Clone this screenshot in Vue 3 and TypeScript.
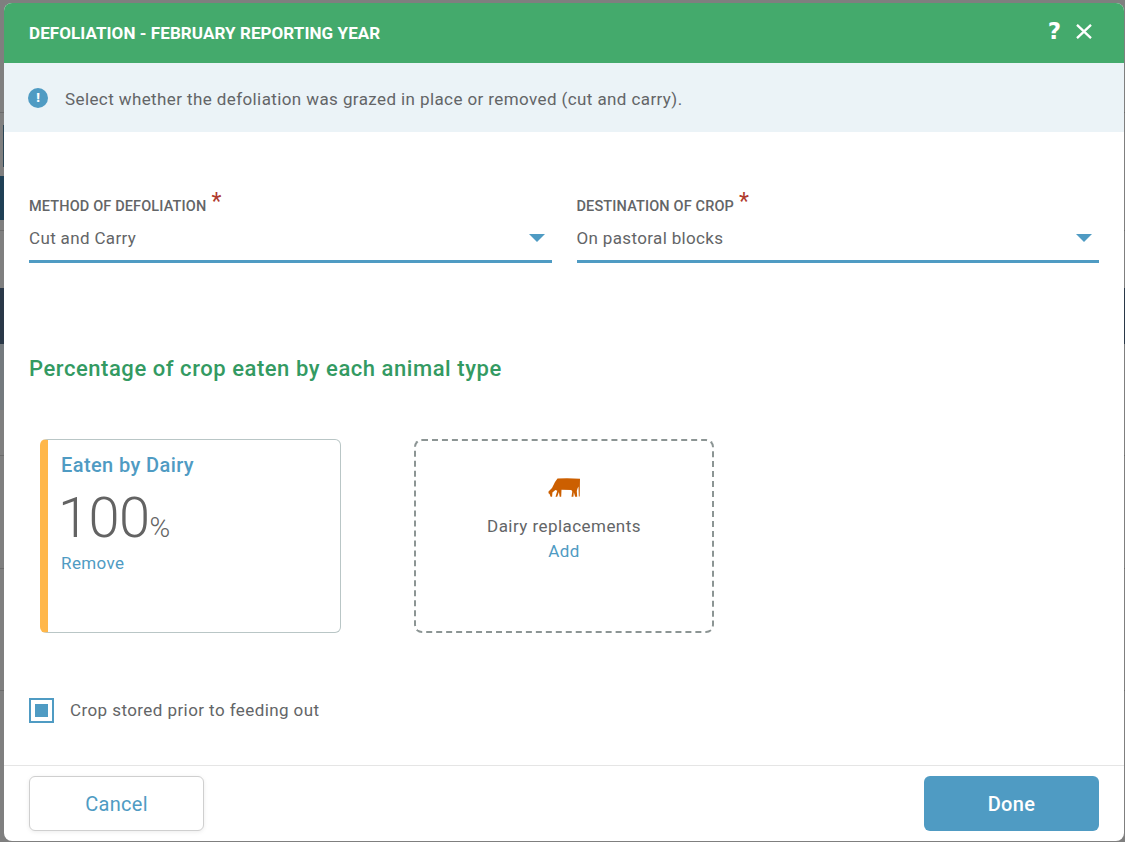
<script setup lang="ts">
const fields = [
  { label: 'METHOD OF DEFOLIATION', value: 'Cut and Carry' },
  { label: 'DESTINATION OF CROP', value: 'On pastoral blocks' },
]
</script>

<template>
  <div class="page">
    <div class="backdrop">
      <i class="s1"></i><i class="s5"></i><i class="s3"></i><i class="s2"></i><i class="s6"></i><i class="s4"></i><i class="s7"></i><i class="s8"></i><i class="s9"></i>
    </div>
    <div class="modal">
      <header class="head">
        <h1>DEFOLIATION - FEBRUARY REPORTING YEAR</h1>
        <div class="head-icons">
          <span class="q">?</span>
          <svg width="16" height="15" viewBox="0 0 16 15"><path d="M1 .8l14 13.400M15 .8 1 14.200" stroke="#fff" stroke-width="2.3" fill="none"/></svg>
        </div>
      </header>
      <div class="info">
        <span class="info-dot">!</span>
        <span class="info-text">Select whether the defoliation was grazed in place or removed (cut and carry).</span>
      </div>
      <div class="body">
        <div class="fields">
          <div v-for="f in fields" :key="f.label" class="field">
            <div class="label">{{ f.label }}<span class="req">*</span></div>
            <div class="select">
              <span>{{ f.value }}</span>
              <svg width="16" height="8" viewBox="0 0 16 8"><path d="M0 0h16L8 8z" fill="#4f9bc3"/></svg>
            </div>
          </div>
        </div>
        <h2>Percentage of crop eaten by each animal type</h2>
        <div class="cards">
          <div class="card">
            <div class="card-title">Eaten by Dairy</div>
            <div class="pct"><span class="num">100</span><span class="sign">%</span></div>
            <a class="link">Remove</a>
          </div>
          <div class="add">
            <svg class="cow" width="34" height="20" viewBox="0 0 34 20"><path fill="#cc5f00" d="M10.500.6 20 .2l13 .6-.3 17.700h-.9L31.500 8.500l-1 2-.7 2.500.4 5.800h-2l-1.400-4.600-.4 4.600h-1.900l.8-5.200-1-1.500-9.800-.3-.3 7h-1.500l-.8-4.800-1.700 4.800H8.500l1.800-6-1.900-.8-3 2.500-.3 4.300H3.600L2.600 16 1.500 15.200 1.500 13.500l3.500-3.500 3-6z"/></svg>
            <div class="add-name">Dairy replacements</div>
            <a class="link">Add</a>
          </div>
        </div>
        <label class="check">
          <span class="box"><span></span></span>
          Crop stored prior to feeding out
        </label>
      </div>
      <footer class="foot">
        <button class="btn cancel">Cancel</button>
        <button class="btn done">Done</button>
      </footer>
    </div>
  </div>
</template>

<style>
html, body { margin: 0; background: #7f7f7f; }
</style>

<style scoped>
.page {
  width: 1125px; height: 842px; box-sizing: border-box; overflow: hidden;
  padding: 3px 1px 1px 4px; background: #7f7f7f; position: relative;
  font-family: "Roboto", "Liberation Sans", sans-serif; color: #636567;
}
.backdrop { position: absolute; inset: 0; }
.backdrop i { position: absolute; left: 0; width: 100%; display: block; }
.s1 { top: 112px; height: 1px; background: #6c6c6c; }
.s5 { top: 230px; height: 1px; background: #6c6c6c; }
.backdrop .s3 { top: 176px; height: 44px; width: 10px; background: #1f4055; }
.s2 { top: 288px; height: 56px; background: #2a3848; }
.backdrop .s6 { top: 344px; height: 66px; width: 10px; background: #747a7e; }
.s4 { top: 455px; height: 1px; background: #6c6c6c; }
.s7 { top: 568px; height: 1px; background: #6c6c6c; }
.s8 { top: 690px; height: 1px; background: #6c6c6c; }
.backdrop .s9 { top: 125px; height: 42px; left: 3px; width: 1px; background: #2a4454; }
.modal {
  position: relative; height: 100%; background: #fff; border-radius: 8px;
  display: flex; flex-direction: column; overflow: hidden;
}
.head {
  height: 60px; flex: none; background: #44aa6c; color: #fff; box-sizing: border-box;
  display: flex; align-items: center; justify-content: space-between; padding: 0 32px 0 25px;
}
h1 { margin: 0; font-size: 17px; font-weight: 700; letter-spacing: .08px; }
.head-icons { display: flex; align-items: center; gap: 15px; margin-bottom: 4px; }
.q { font-family: "DejaVu Sans", sans-serif; font-size: 23px; font-weight: 700; line-height: 1; }
.info {
  height: 69px; flex: none; background: #ebf3f7; display: flex; align-items: center;
  padding-left: 24px; font-size: 17px; letter-spacing: .4px; gap: 17px;
}
.info-text { margin-top: 3px; }
.info-dot {
  width: 20px; height: 20px; border-radius: 50%; background: #4f9bc3; color: #fff;
  font-weight: 900; font-size: 13px; letter-spacing: 0; display: flex; align-items: center; justify-content: center;
}
.body { flex: 1; padding: 0 25px; display: flex; flex-direction: column; }
.fields { display: flex; gap: 25px; padding-top: 60px; }
.field { flex: 1; }
.label { font-size: 14.5px; font-weight: 500; height: 24px; line-height: 30px; white-space: nowrap; letter-spacing: .14px; }
.req { color: #b03a2e; font-size: 23px; font-weight: 400; margin-left: 5px; line-height: 14px; vertical-align: 2px; }
.select {
  height: 47px; box-sizing: border-box; border-bottom: 3px solid #4f9bc3; font-size: 17px; letter-spacing: .35px;
  display: flex; align-items: center; justify-content: space-between; padding: 0 7px 0 0;
}
h2 { margin: 92px 0 0; font-size: 22px; line-height: 28px; font-weight: 500; color: #339a62; letter-spacing: .55px; }
.cards { display: flex; gap: 73px; padding: 56px 0 0 11px; }
.card {
  width: 301px; height: 194px; box-sizing: border-box; border: 1px solid #b9c6c6; border-left: 8px solid #ffb74a;
  border-radius: 6px; padding: 12px 13px;
}
.card-title { font-size: 20px; font-weight: 500; color: #4f9bc3; line-height: 26px; letter-spacing: .4px; }
.pct { line-height: 54px; height: 62px; margin-top: 13px; margin-left: -3px; margin-bottom: -2px; }
.num { font-size: 56px; font-weight: 300; color: #636363; letter-spacing: -.6px; }
.sign { font-size: 28px; font-weight: 300; color: #636363; }
.link { color: #4f9bc3; font-size: 17px; line-height: 24px; letter-spacing: .4px; display: block; }
.add {
  width: 300px; height: 194px; box-sizing: border-box; border: 2px dashed #8c9594; border-radius: 8px;
  display: flex; flex-direction: column; align-items: center; padding-top: 37px;
}
.add-name { font-size: 17px; letter-spacing: .45px; margin-top: 16px; line-height: 25px; }
.check { display: flex; align-items: center; gap: 16px; margin-top: 64px; font-size: 17px; letter-spacing: .42px; height: 26px; }
.box {
  width: 25px; height: 25px; box-sizing: border-box; border: 2px solid #4f9bc3; padding: 4px; display: block; flex: none;
}
.box span { display: block; width: 13px; height: 13px; background: #4f9bc3; }
.foot {
  height: 76px; flex: none; box-sizing: border-box; border-top: 1px solid #e5e5e5;
  display: flex; justify-content: space-between; padding: 10px 25px 0 25px;
}
.btn {
  width: 175px; height: 55px; border-radius: 6px; font: 400 20px "Roboto", sans-serif; letter-spacing: .3px; cursor: pointer; padding-top: 2px;
}
.cancel { background: #fff; border: 1px solid #cfcfcf; color: #4f9bc3; box-shadow: 0 1px 4px rgba(0,0,0,.08); }
.done { background: #4f9bc3; border: 0; color: #fff; font-weight: 500; }
</style>
